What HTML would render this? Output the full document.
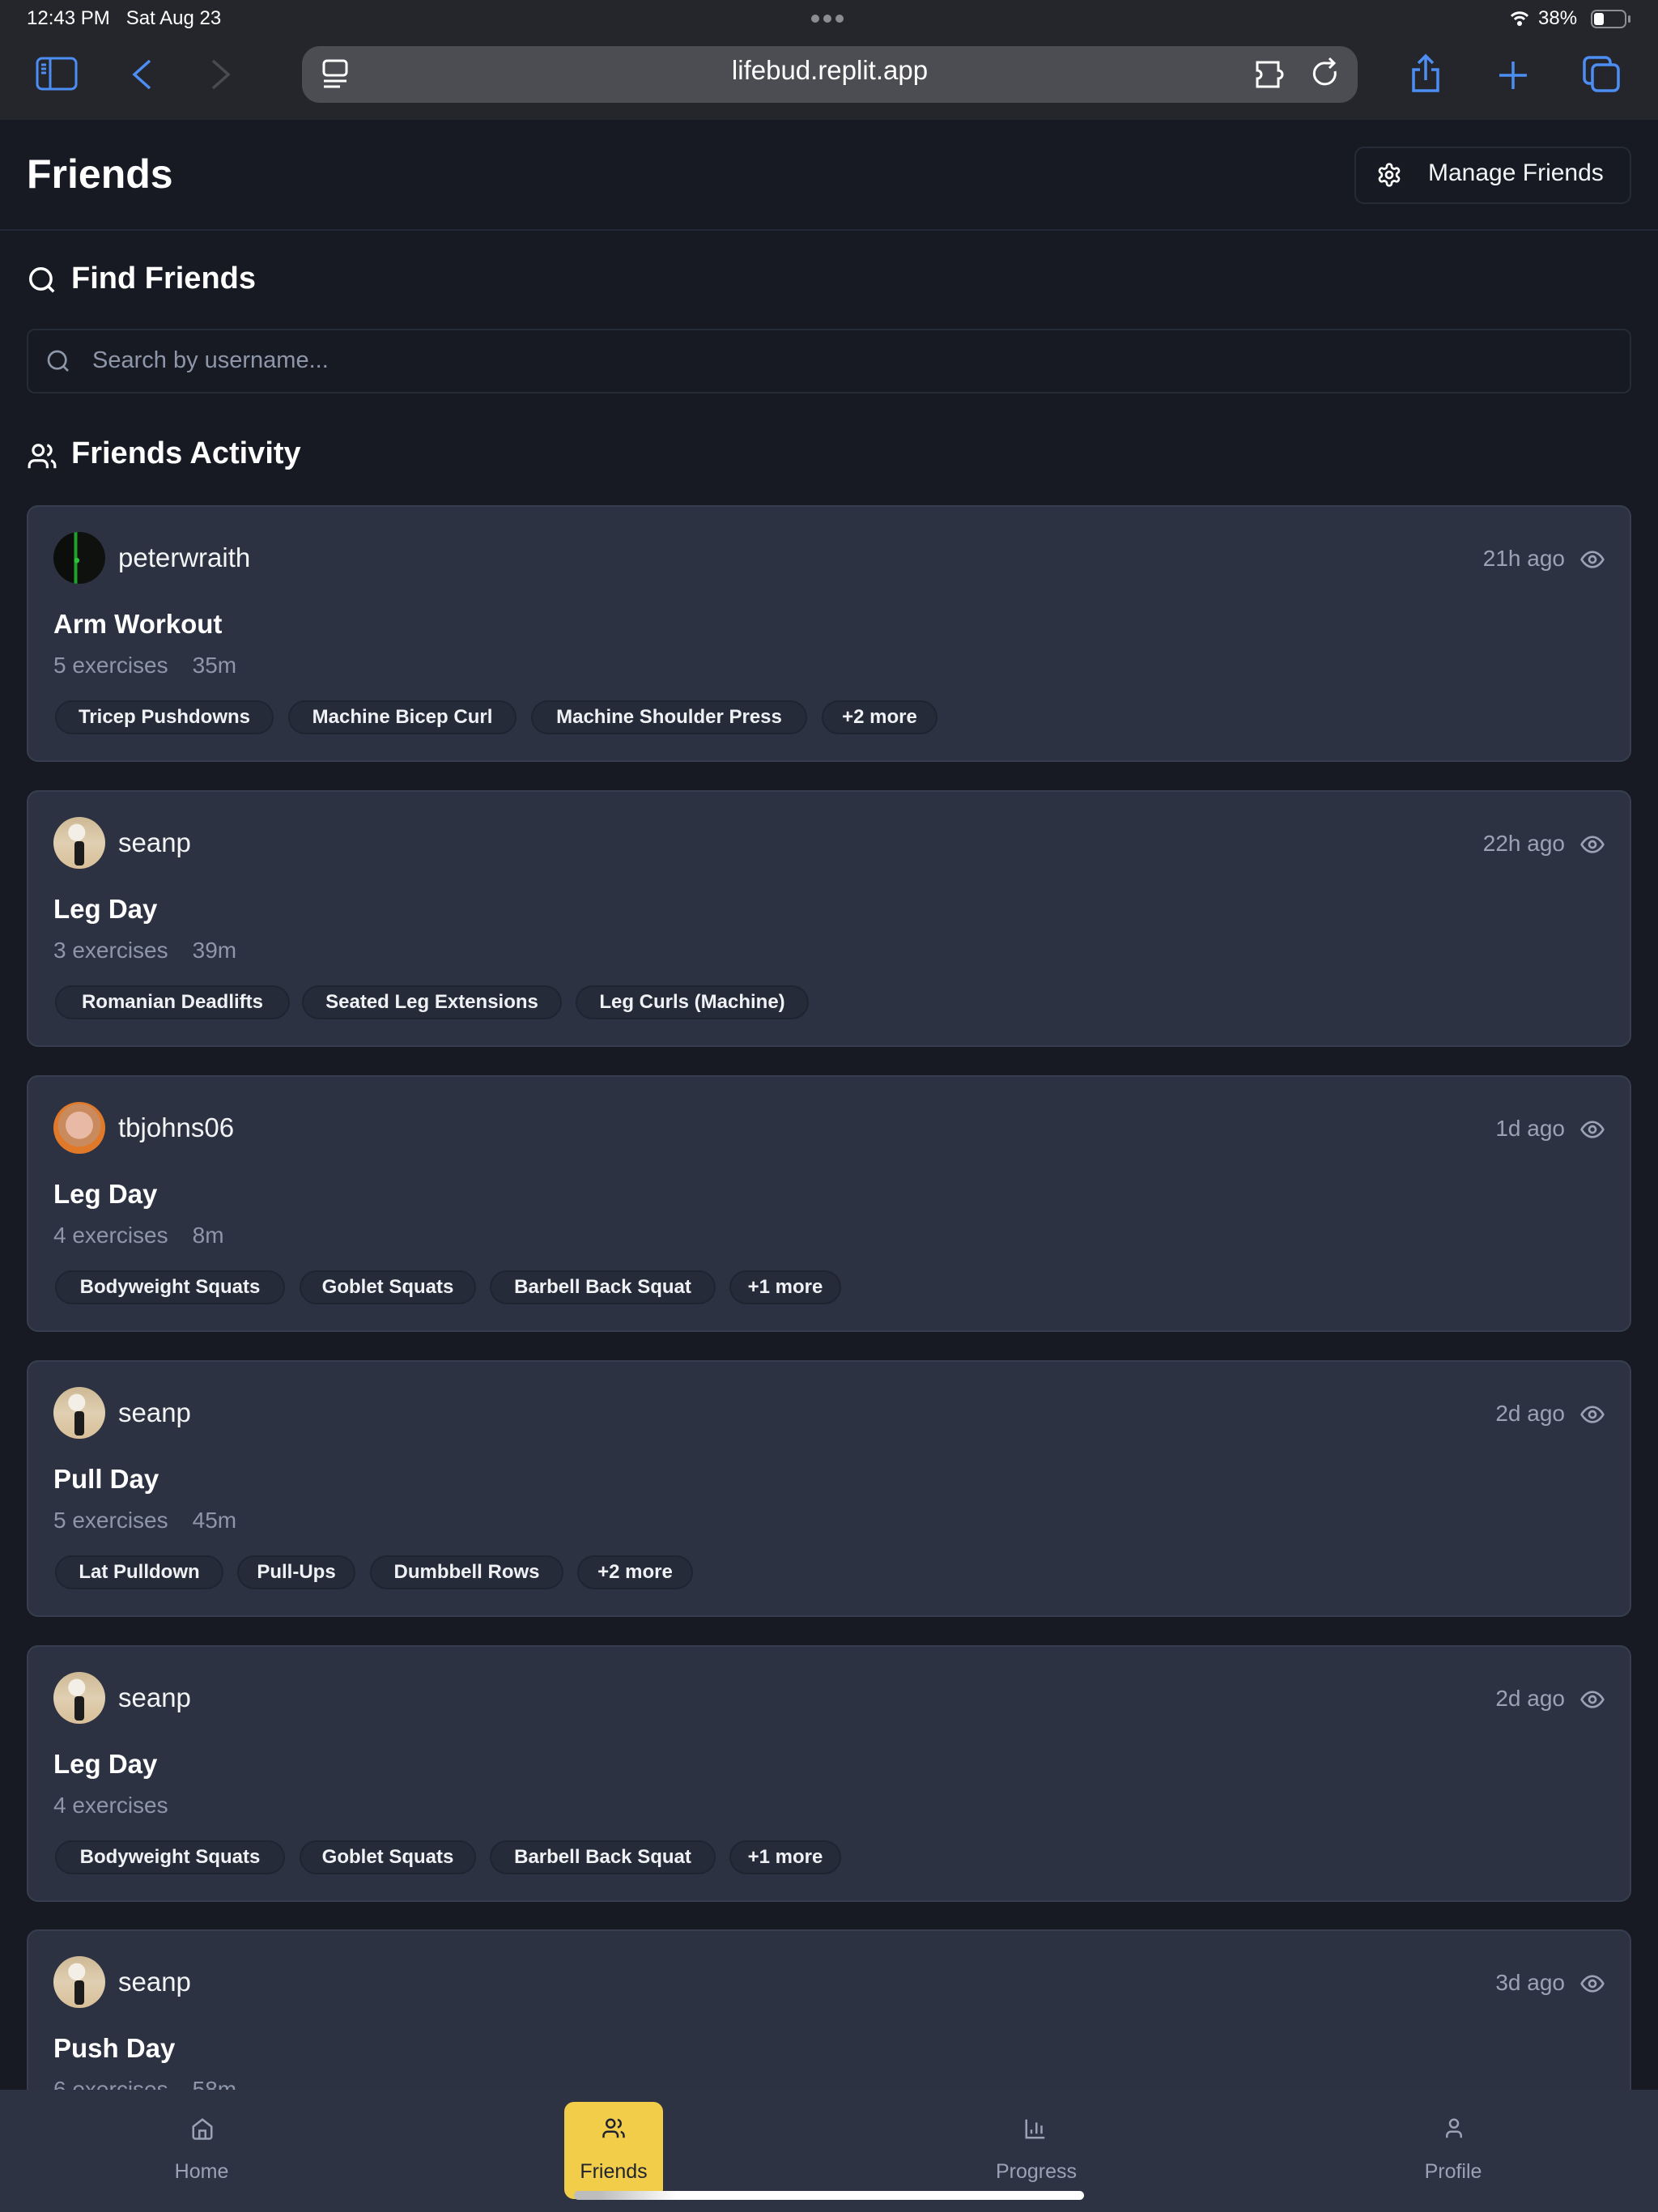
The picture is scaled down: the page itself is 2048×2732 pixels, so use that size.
<!DOCTYPE html>
<html><head><meta charset="utf-8"><style>
*{box-sizing:border-box;margin:0;padding:0}
body{width:2048px;height:2732px;background:#171a23;font-family:"Liberation Sans",sans-serif;color:#fff;position:relative;overflow:hidden}
.abs{position:absolute}
.card{position:absolute;left:33px;width:1982px;height:317px;background:#2d3243;border:2px solid #383e50;border-radius:14px}
.av{position:absolute;left:31px;top:31px;width:64px;height:64px;border-radius:50%;overflow:hidden}
.sean{background:radial-gradient(circle at 45% 30%,#f4efe6 0 18%,transparent 19%),linear-gradient(180deg,#cdb894 0%,#e0cfb2 50%,#d8bf98 100%)}
.sean:after{content:"";position:absolute;left:26px;top:30px;width:12px;height:30px;background:#1c1c1c;border-radius:4px}
.user{position:absolute;left:111px;top:44px;font-size:33px;line-height:38px;color:#f3f4f6}
.time{position:absolute;right:80px;top:48px;font-size:28px;line-height:32px;color:#9aa3b5}
.eye{position:absolute;right:30px;top:49px}
.title{position:absolute;left:31px;top:126px;font-size:33px;font-weight:bold;line-height:38px;color:#fff}
.meta{position:absolute;left:31px;top:180px;font-size:28px;line-height:32px;color:#8e97a9;word-spacing:0}
.meta span{margin-left:30px}
.chip{position:absolute;top:239px;height:42px;border:2px solid #1f2431;background:#262b3a;border-radius:21px;font-size:24px;font-weight:bold;line-height:38px;text-align:center;color:#f0f1f4;white-space:nowrap}
.nav{position:absolute;left:0;top:2581px;width:2048px;height:151px;background:#2e3344}
.lbl{position:absolute;top:2668px;font-size:25px;color:#9aa3b5;text-align:center;width:200px}
</style></head><body>
<div class="abs" style="left:0;top:0;width:2048px;height:148px;background:#25262b"></div>
<div class="abs" style="left:33px;top:9px;font-size:24px;color:#fff">12:43 PM&nbsp;&nbsp;&nbsp;Sat Aug 23</div>
<div class="abs" style="left:1002px;top:18px;width:42px;height:10px;display:flex;gap:5px"><i style="width:10px;height:10px;border-radius:50%;background:#8c8c90"></i><i style="width:10px;height:10px;border-radius:50%;background:#8c8c90"></i><i style="width:10px;height:10px;border-radius:50%;background:#8c8c90"></i></div>
<div class="abs" style="left:1900px;top:9px;font-size:24px;color:#fff">38%</div>
<svg class="abs" style="left:1864px;top:10px" width="26" height="26" viewBox="0 0 26 26"><path d="M3 10a14 14 0 0 1 20 0M7 14a8 8 0 0 1 12 0" stroke="#fff" stroke-width="3" fill="none"/><circle cx="13" cy="19" r="3" fill="#fff"/></svg>
<div class="abs" style="left:1965px;top:12px;width:44px;height:23px;border:2px solid #8e8e92;border-radius:7px"><div style="margin:2px;width:12px;height:15px;background:#fff;border-radius:3px"></div></div>
<div class="abs" style="left:2011px;top:19px;width:3px;height:9px;background:#8e8e92;border-radius:2px"></div>
<svg class="abs" style="left:44px;top:70px" width="54" height="44" viewBox="0 0 54 44"><rect x="2" y="2" width="48" height="38" rx="6" stroke="#4d8ef5" stroke-width="3" fill="none"/><path d="M18 2v38M7 10h6M7 15h6M7 20h6" stroke="#4d8ef5" stroke-width="3"/></svg>
<svg class="abs" style="left:160px;top:72px" width="30" height="40"><path d="M25 3L6 20l19 17" stroke="#4d8ef5" stroke-width="3.5" fill="none"/></svg>
<svg class="abs" style="left:258px;top:72px" width="30" height="40"><path d="M5 3l19 17L5 37" stroke="#4a4b50" stroke-width="3.5" fill="none"/></svg>
<div class="abs" style="left:373px;top:57px;width:1304px;height:70px;background:#4c4d52;border-radius:22px"></div>
<svg class="abs" style="left:398px;top:73px" width="34" height="38"><rect x="2" y="2" width="28" height="18" rx="4" stroke="#fff" stroke-width="3" fill="none"/><path d="M2 27h28M2 34h20" stroke="#fff" stroke-width="3"/></svg>
<div class="abs" style="left:373px;top:68px;width:1304px;text-align:center;font-size:33px;color:#fff">lifebud.replit.app</div>
<svg class="abs" style="left:1550px;top:73px" width="46" height="38"><path d="M3 4h26v10a5 5 0 0 1 0 10v10H3V24a5 5 0 0 0 0-10z" stroke="#fff" stroke-width="3" fill="none"/></svg>
<svg class="abs" style="left:1620px;top:70px" width="36" height="42"><path d="M29 18A13 13 0 1 1 18 8h8M22 2l6 6-6 6" stroke="#fff" stroke-width="3" fill="none"/></svg>
<svg class="abs" style="left:1741px;top:66px" width="40" height="50"><path d="M20 3v30M11 12l9-9 9 9M13 20H5v26h30V20h-8" stroke="#4d8ef5" stroke-width="3.5" fill="none"/></svg>
<svg class="abs" style="left:1850px;top:74px" width="38" height="38"><path d="M19 2v34M2 19h34" stroke="#4d8ef5" stroke-width="3.5"/></svg>
<svg class="abs" style="left:1955px;top:69px" width="48" height="46"><rect x="2" y="2" width="32" height="32" rx="6" stroke="#4d8ef5" stroke-width="3.5" fill="none"/><rect x="12" y="11" width="32" height="32" rx="6" stroke="#4d8ef5" stroke-width="3.5" fill="#25262b"/></svg>

<div class="abs" style="left:33px;top:186px;font-size:50px;font-weight:bold">Friends</div>
<div class="abs" style="left:1673px;top:181px;width:342px;height:71px;border:2px solid #262b38;border-radius:12px"></div>
<svg class="abs" style="left:1700px;top:200px" width="32" height="32" viewBox="0 0 24 24"><path d="M12.22 2h-.44a2 2 0 0 0-2 2v.18a2 2 0 0 1-1 1.73l-.43.25a2 2 0 0 1-2 0l-.15-.08a2 2 0 0 0-2.73.73l-.22.38a2 2 0 0 0 .73 2.730l.15.1a2 2 0 0 1 1 1.72v.51a2 2 0 0 1-1 1.74l-.15.09a2 2 0 0 0-.73 2.73l.22.38a2 2 0 0 0 2.73.73l.15-.08a2 2 0 0 1 2 0l.43.25a2 2 0 0 1 1 1.73V20a2 2 0 0 0 2 2h.44a2 2 0 0 0 2-2v-.18a2 2 0 0 1 1-1.73l.43-.25a2 2 0 0 1 2 0l.15.08a2 2 0 0 0 2.73-.73l.22-.39a2 2 0 0 0-.73-2.73l-.15-.08a2 2 0 0 1-1-1.74v-.5a2 2 0 0 1 1-1.74l.15-.09a2 2 0 0 0 .73-2.73l-.22-.38a2 2 0 0 0-2.73-.73l-.15.08a2 2 0 0 1-2 0l-.43-.25a2 2 0 0 1-1-1.73V4a2 2 0 0 0-2-2z" stroke="#fff" stroke-width="2" fill="none"/><circle cx="12" cy="12" r="3" stroke="#fff" stroke-width="2" fill="none"/></svg>
<div class="abs" style="left:1764px;top:197px;font-size:30px;color:#f3f4f6">Manage Friends</div>
<div class="abs" style="left:0;top:283px;width:2048px;height:2px;background:#232836"></div>

<svg class="abs" style="left:33px;top:327px" width="38" height="38" viewBox="0 0 24 24"><circle cx="11" cy="11" r="8" stroke="#fff" stroke-width="2.2" fill="none"/><path d="M21 21l-4.3-4.3" stroke="#fff" stroke-width="2.2"/></svg>
<div class="abs" style="left:88px;top:323px;font-size:38px;font-weight:bold">Find Friends</div>
<div class="abs" style="left:33px;top:406px;width:1982px;height:80px;border:2px solid #262b38;border-radius:10px"></div>
<svg class="abs" style="left:56px;top:430px" width="32" height="32" viewBox="0 0 24 24"><circle cx="11" cy="11" r="8" stroke="#8e97a9" stroke-width="2" fill="none"/><path d="M21 21l-4.3-4.3" stroke="#8e97a9" stroke-width="2"/></svg>
<div class="abs" style="left:114px;top:429px;font-size:29px;color:#8e97a9">Search by username...</div>

<svg class="abs" style="left:33px;top:545px" width="38" height="38" viewBox="0 0 24 24"><path d="M16 21v-2a4 4 0 0 0-4-4H6a4 4 0 0 0-4 4v2" stroke="#fff" stroke-width="2" fill="none"/><circle cx="9" cy="7" r="4" stroke="#fff" stroke-width="2" fill="none"/><path d="M22 21v-2a4 4 0 0 0-3-3.87M16 3.13a4 4 0 0 1 0 7.75" stroke="#fff" stroke-width="2" fill="none"/></svg>
<div class="abs" style="left:88px;top:539px;font-size:38px;font-weight:bold">Friends Activity</div>

<div class="card" style="top:624px">
 <div class="av" style="background:radial-gradient(circle at 45% 55%,#2fbf3a 0 6%,transparent 7%),linear-gradient(90deg,#0c0e0c 0 40%,#1fa02a 40% 46%,#0f110f 46%)"></div>
 <div class="user">peterwraith</div><div class="time">21h ago</div>
 <svg class="eye" width="32" height="32" viewBox="0 0 24 24"><path d="M2 12s3.6-7 10-7 10 7 10 7-3.6 7-10 7S2 12 2 12z" stroke="#9aa3b5" stroke-width="2" fill="none"/><circle cx="12" cy="12" r="3" stroke="#9aa3b5" stroke-width="2" fill="none"/></svg>
 <div class="title">Arm Workout</div><div class="meta">5 exercises<span>35m</span></div>
 <div class="chip" style="left:33px;width:270px">Tricep Pushdowns</div>
 <div class="chip" style="left:321px;width:282px">Machine Bicep Curl</div>
 <div class="chip" style="left:621px;width:341px">Machine Shoulder Press</div>
 <div class="chip" style="left:980px;width:143px">+2 more</div>
</div>
<div class="card" style="top:976px">
 <div class="av sean"></div>
 <div class="user">seanp</div><div class="time">22h ago</div>
 <svg class="eye" width="32" height="32" viewBox="0 0 24 24"><path d="M2 12s3.6-7 10-7 10 7 10 7-3.6 7-10 7S2 12 2 12z" stroke="#9aa3b5" stroke-width="2" fill="none"/><circle cx="12" cy="12" r="3" stroke="#9aa3b5" stroke-width="2" fill="none"/></svg>
 <div class="title">Leg Day</div><div class="meta">3 exercises<span>39m</span></div>
 <div class="chip" style="left:33px;width:290px">Romanian Deadlifts</div>
 <div class="chip" style="left:338px;width:321px">Seated Leg Extensions</div>
 <div class="chip" style="left:676px;width:288px">Leg Curls (Machine)</div>
</div>
<div class="card" style="top:1328px">
 <div class="av" style="background:radial-gradient(circle at 50% 45%,#e8b9a4 0 35%,#c98a5e 36% 55%,#e07a2a 56%)"></div>
 <div class="user">tbjohns06</div><div class="time">1d ago</div>
 <svg class="eye" width="32" height="32" viewBox="0 0 24 24"><path d="M2 12s3.6-7 10-7 10 7 10 7-3.6 7-10 7S2 12 2 12z" stroke="#9aa3b5" stroke-width="2" fill="none"/><circle cx="12" cy="12" r="3" stroke="#9aa3b5" stroke-width="2" fill="none"/></svg>
 <div class="title">Leg Day</div><div class="meta">4 exercises<span>8m</span></div>
 <div class="chip" style="left:33px;width:284px">Bodyweight Squats</div>
 <div class="chip" style="left:335px;width:218px">Goblet Squats</div>
 <div class="chip" style="left:570px;width:279px">Barbell Back Squat</div>
 <div class="chip" style="left:866px;width:138px">+1 more</div>
</div>
<div class="card" style="top:1680px">
 <div class="av sean"></div>
 <div class="user">seanp</div><div class="time">2d ago</div>
 <svg class="eye" width="32" height="32" viewBox="0 0 24 24"><path d="M2 12s3.6-7 10-7 10 7 10 7-3.6 7-10 7S2 12 2 12z" stroke="#9aa3b5" stroke-width="2" fill="none"/><circle cx="12" cy="12" r="3" stroke="#9aa3b5" stroke-width="2" fill="none"/></svg>
 <div class="title">Pull Day</div><div class="meta">5 exercises<span>45m</span></div>
 <div class="chip" style="left:33px;width:208px">Lat Pulldown</div>
 <div class="chip" style="left:258px;width:146px">Pull-Ups</div>
 <div class="chip" style="left:422px;width:239px">Dumbbell Rows</div>
 <div class="chip" style="left:678px;width:143px">+2 more</div>
</div>
<div class="card" style="top:2032px">
 <div class="av sean"></div>
 <div class="user">seanp</div><div class="time">2d ago</div>
 <svg class="eye" width="32" height="32" viewBox="0 0 24 24"><path d="M2 12s3.6-7 10-7 10 7 10 7-3.6 7-10 7S2 12 2 12z" stroke="#9aa3b5" stroke-width="2" fill="none"/><circle cx="12" cy="12" r="3" stroke="#9aa3b5" stroke-width="2" fill="none"/></svg>
 <div class="title">Leg Day</div><div class="meta">4 exercises</div>
 <div class="chip" style="left:33px;width:284px">Bodyweight Squats</div>
 <div class="chip" style="left:335px;width:218px">Goblet Squats</div>
 <div class="chip" style="left:570px;width:279px">Barbell Back Squat</div>
 <div class="chip" style="left:866px;width:138px">+1 more</div>
</div>
<div class="card" style="top:2383px">
 <div class="av sean"></div>
 <div class="user">seanp</div><div class="time">3d ago</div>
 <svg class="eye" width="32" height="32" viewBox="0 0 24 24"><path d="M2 12s3.6-7 10-7 10 7 10 7-3.6 7-10 7S2 12 2 12z" stroke="#9aa3b5" stroke-width="2" fill="none"/><circle cx="12" cy="12" r="3" stroke="#9aa3b5" stroke-width="2" fill="none"/></svg>
 <div class="title">Push Day</div><div class="meta">6 exercises<span>58m</span></div>
</div>

<div class="nav"></div>
<div class="abs" style="left:697px;top:2596px;width:122px;height:120px;background:#f2cd4a;border-radius:12px"></div>
<svg class="abs" style="left:235px;top:2614px" width="30" height="30" viewBox="0 0 24 24"><path d="M3 10l9-7 9 7v10a2 2 0 0 1-2 2H5a2 2 0 0 1-2-2z" stroke="#9aa3b5" stroke-width="2" fill="none"/><path d="M9 22v-8h6v8" stroke="#9aa3b5" stroke-width="2" fill="none"/></svg>
<svg class="abs" style="left:743px;top:2614px" width="30" height="30" viewBox="0 0 24 24"><path d="M16 21v-2a4 4 0 0 0-4-4H6a4 4 0 0 0-4 4v2" stroke="#1f2230" stroke-width="2" fill="none"/><circle cx="9" cy="7" r="4" stroke="#1f2230" stroke-width="2" fill="none"/><path d="M22 21v-2a4 4 0 0 0-3-3.87M16 3.13a4 4 0 0 1 0 7.75" stroke="#1f2230" stroke-width="2" fill="none"/></svg>
<svg class="abs" style="left:1264px;top:2614px" width="30" height="30" viewBox="0 0 24 24"><path d="M3 3v18h18M8 17v-4M13 17V6M18 17v-8" stroke="#9aa3b5" stroke-width="2" fill="none"/></svg>
<svg class="abs" style="left:1781px;top:2614px" width="30" height="30" viewBox="0 0 24 24"><circle cx="12" cy="7" r="4" stroke="#9aa3b5" stroke-width="2" fill="none"/><path d="M19 21v-2a4 4 0 0 0-4-4H9a4 4 0 0 0-4 4v2" stroke="#9aa3b5" stroke-width="2" fill="none"/></svg>
<div class="lbl" style="left:149px">Home</div>
<div class="lbl" style="left:658px;color:#1f2230">Friends</div>
<div class="lbl" style="left:1180px">Progress</div>
<div class="lbl" style="left:1695px">Profile</div>
<div class="abs" style="left:709px;top:2706px;width:630px;height:11px;border-radius:6px;background:linear-gradient(90deg,#bdbdbd 0,#bdbdbd 5%,#fff 20%)"></div>
</body></html>
